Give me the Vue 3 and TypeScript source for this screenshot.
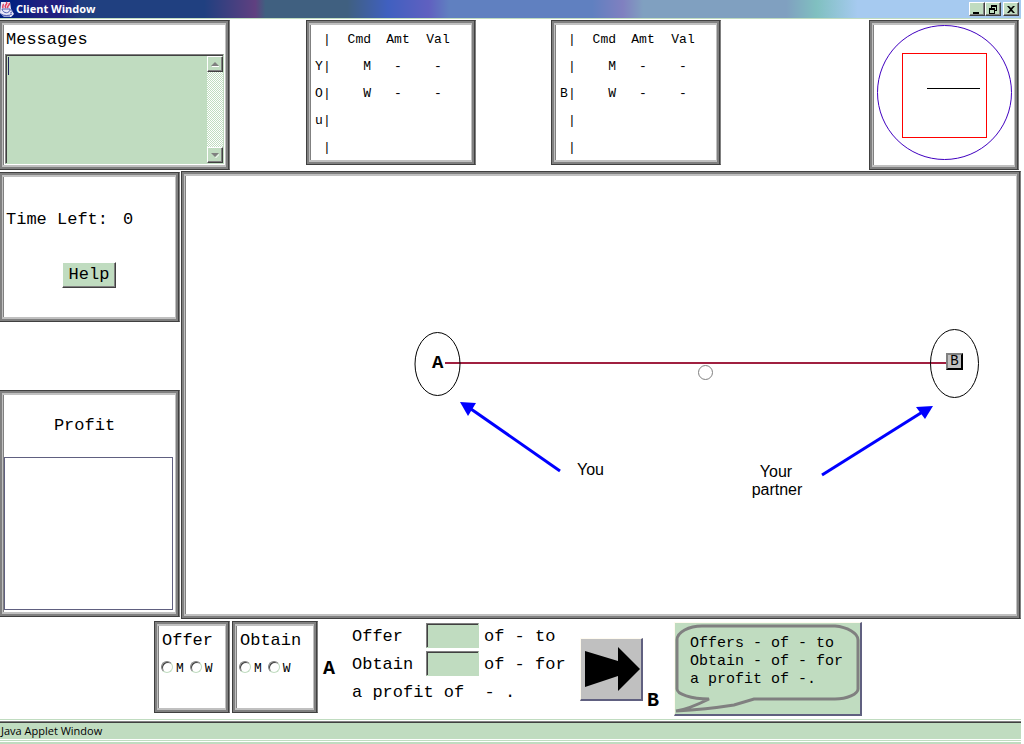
<script setup lang="ts">
import { ref } from 'vue'

interface Holding {
  label: string
  side: string[]
}

interface Choice {
  name: string
  wide: boolean
}

const holdings: Holding[] = [
  { label: 'Your holdings', side: ['', 'Y', 'O', 'u', ''] },
  { label: 'Holdings of B', side: ['', '', 'B', '', ''] },
]
const commodities = ['', 'M', 'W', '', '']
const choices: Choice[] = [
  { name: 'Offer', wide: false },
  { name: 'Obtain', wide: true },
]
const goods = ['M', 'W']

const messages = ref('')
const offerAmount = ref('')
const obtainAmount = ref('')
const picked = ref<Record<string, string>>({ Offer: '', Obtain: '' })
const timeLeft = ref(0)
</script>

<template>
  <div class="window">
    <header class="titlebar">
      <svg class="logo" width="15" height="16" viewBox="0 0 15 16" aria-hidden="true">
        <path d="M1 1h9l1 7 3 5-3 3H4L0 12z" fill="#e8e8f8" />
        <path d="M6 1c3 2-3 3 0 6M9 2c2 2-3 3-1 5M3 3c1 1-1 2 0 4" fill="none" stroke="#e04060" stroke-width="1.5" />
        <path d="M2 8h8c0 5-7 5-8 0zM10 9c3-1 3 3 0 3M1 13c3 2 8 2 11 0M3 15h7" fill="none" stroke="#5060b0" stroke-width="1" />
      </svg>
      <h1>Client Window</h1>
      <div class="controls">
        <button type="button" aria-label="Minimize">
          <svg width="12" height="10" viewBox="0 0 12 10"><path d="M2 8h6v2H2z" /></svg>
        </button>
        <button type="button" aria-label="Restore">
          <svg width="12" height="10" viewBox="0 0 12 10">
            <path fill-rule="evenodd" d="M4 1h6v6H8V6h1V3H5v1H4zM2 4h6v6H2zM3 6v3h4V6z" />
          </svg>
        </button>
        <button type="button" aria-label="Close" class="close">
          <svg width="12" height="10" viewBox="0 0 12 10">
            <path d="M2 2h2l2 2 2-2h2L7 5.500l3 3.500H8L6 7 4 9H2l3-3.500z" />
          </svg>
        </button>
      </div>
    </header>

    <section class="top">
      <div class="panel flush messages">
        <label for="messages">Messages</label>
        <div class="message-box">
          <textarea id="messages" v-model="messages"></textarea>
          <span class="caret"></span>
          <div class="scrollbar">
            <button type="button" aria-label="Scroll up">
              <svg width="8" height="5" viewBox="0 0 8 5"><path d="M4 0l4 4H0z" fill="#808080" /><path d="M1 4h7v1H1z" fill="#fff" /></svg>
            </button>
            <button type="button" aria-label="Scroll down">
              <svg width="8" height="5" viewBox="0 0 8 5"><path d="M8 1v1L5 5H4z" fill="#fff" /><path d="M0 0h8L4 4z" fill="#808080" /></svg>
            </button>
          </div>
        </div>
      </div>

      <div v-for="(h, n) in holdings" :key="h.label" class="panel holding" :class="{ second: n === 1 }">
        <table :aria-label="h.label">
          <tbody>
            <tr v-for="(c, i) in commodities" :key="i">
              <td class="side">{{ h.side[i] }}</td>
              <td class="side">|</td>
              <template v-if="i === 0">
                <th class="cmd" scope="col">Cmd</th>
                <th class="num" scope="col">Amt</th>
                <th class="num" scope="col">Val</th>
              </template>
              <template v-else>
                <td class="cmd">{{ c }}</td>
                <td class="num">{{ c ? '-' : '' }}</td>
                <td class="num">{{ c ? '-' : '' }}</td>
              </template>
            </tr>
          </tbody>
        </table>
      </div>

      <div class="panel dial">
        <svg viewBox="0 0 140 140" aria-hidden="true">
          <circle cx="70.500" cy="67.500" r="67" fill="none" stroke="#4000c0" />
          <rect x="28.500" y="28.500" width="84" height="84" fill="none" stroke="#f00" />
          <path d="M53 63.500h53" stroke="#000" />
        </svg>
      </div>
    </section>

    <main class="middle">
      <aside>
        <div class="panel flush time">
          <p class="clock"><span>Time Left:</span><output>{{ timeLeft }}</output></p>
          <button type="button" class="help">Help</button>
        </div>
        <div class="panel flush profit">
          <h2>Profit</h2>
          <div class="profit-list"></div>
        </div>
      </aside>

      <div class="panel stage">
        <svg viewBox="186 176 830 438" role="group" aria-label="Network">
          <path d="M445 363H948" stroke="#a02040" stroke-width="2" />
          <ellipse cx="437.500" cy="364" rx="22.500" ry="31.500" fill="none" stroke="#000" />
          <text x="432" y="368" class="node">A</text>
          <circle cx="705.500" cy="372.500" r="7" fill="none" stroke="#808080" />
          <ellipse cx="954.500" cy="363.500" rx="24" ry="34" fill="none" stroke="#000" />
          <foreignObject x="946" y="353" width="17" height="17">
            <button type="button" class="partner">B</button>
          </foreignObject>
          <path d="M471 409l89 62" stroke="#00f" stroke-width="3" />
          <path d="M460 402l16 1-8 13z" fill="#00f" />
          <path d="M822 475l102-64" stroke="#00f" stroke-width="3" />
          <path d="M933 406l-17 1 9 12z" fill="#00f" />
          <text x="577" y="475" class="note">You</text>
          <text x="776" y="477" class="note mid">Your</text>
          <text x="777" y="495" class="note mid">partner</text>
        </svg>
      </div>
    </main>

    <section class="bottom">
      <fieldset v-for="c in choices" :key="c.name" class="panel choice" :class="{ wide: c.wide }">
        <legend>{{ c.name }}</legend>
        <div class="radios">
          <label v-for="g in goods" :key="g">
            <input v-model="picked[c.name]" type="radio" :name="c.name" :value="g" />
            <span>{{ g }}</span>
          </label>
        </div>
      </fieldset>

      <strong class="from">A</strong>

      <form class="deal" @submit.prevent>
        <label for="offer-amount">Offer</label>
        <input id="offer-amount" v-model="offerAmount" type="text" />
        <span>of - to</span>
        <label for="obtain-amount">Obtain</label>
        <input id="obtain-amount" v-model="obtainAmount" type="text" />
        <span>of - for</span>
        <p>a profit of&nbsp; - .</p>
      </form>

      <button type="button" class="send" aria-label="Send offer">
        <svg width="60" height="60" viewBox="0 0 60 60">
          <path d="M4 12l33 10V8l22 22-22 22V37L4 48z" />
        </svg>
      </button>

      <strong class="to">B</strong>

      <div class="bubble">
        <svg width="185" height="91" viewBox="0 0 185 91" aria-hidden="true">
          <path
            d="M27 3H160C172 4 183 10 183 17V66C183 71 172 76 160 76H79L59 82C40 85 20 87 1 88C14 86 24 81 34 76C16 76 2 71 2 66V17C2 9 14 3 27 3z"
            fill="none"
            stroke="#808080"
            stroke-width="3"
          />
        </svg>
        <p>Offers - of - to<br />Obtain - of - for<br />a profit of -.</p>
      </div>
    </section>

    <footer class="status"><span>Java Applet Window</span></footer>
  </div>
</template>

<style>
body {
  background: #fff;
}
</style>

<style scoped>
* {
  box-sizing: border-box;
}

.window {
  margin-right: 3px;
  color: #000;
  background: #fff;
  font: 17px/20px 'Liberation Mono', monospace;
}

h1,
h2,
p {
  margin: 0;
  font-weight: normal;
}

button,
input,
textarea {
  margin: 0;
  padding: 0;
  border-radius: 0;
  font: inherit;
  color: inherit;
}

svg {
  display: block;
}

.titlebar {
  display: flex;
  align-items: center;
  height: 19px;
  border-bottom: 1px solid #c0dcc0;
  background: linear-gradient(
    90deg,
    #002080 0,
    #002080 1%,
    #202080 4%,
    #202080 6%,
    #204080 8%,
    #204080 20%,
    #604080 25%,
    #406080 26%,
    #406080 34%,
    #4060c0 38%,
    #6060c0 42%,
    #6080c0 44%,
    #6080c0 58%,
    #8080c0 61%,
    #80a0c0 63%,
    #80a0c0 77%,
    #80c0c0 80%,
    #a6caf0 84%
  );
}

.titlebar h1 {
  flex: 1;
  margin-left: 1px;
  color: #fff;
  font: bold 11px/18px 'Open Sans', 'Noto Sans', sans-serif;
}

.controls {
  display: flex;
  padding-right: 2px;
}

.controls button {
  width: 16px;
  height: 14px;
  border: 1px solid #fff;
  border-right: 1px solid #404040;
  border-bottom: 1px solid #404040;
  box-shadow: inset -1px -1px 0 #808080;
  background: #c0dcc0;
  padding-left: 1px;
}

.controls .close {
  margin-left: 2px;
}

.panel {
  border: 1px solid #404040;
  border-right-color: #808080;
  padding: 4px;
  background: #fff;
  box-shadow:
    inset -1px 0 0 #404040,
    inset 2px 2px 0 #808080,
    inset -3px -2px 0 #808080,
    inset 3px 4px 0 #c0c0c0,
    inset -4px -4px 0 #c0c0c0,
    inset 4px 0 0 #808080;
}

.flush {
  border-left-width: 0;
}

.top {
  display: grid;
  grid-template-columns: 230px 76fr 170px 75fr 170px 148fr 150px 2px;
  align-items: start;
  padding: 1px 0;
}

.messages {
  height: 150px;
}

.messages label {
  display: block;
  padding: 5px 0 4px 2px;
}

.message-box {
  display: flex;
  position: relative;
  height: 110px;
  margin: 0 1px;
  border: 1px solid #808080;
  border-right-color: #c0dcc0;
  border-bottom-color: #c0dcc0;
  box-shadow: inset 1px 1px 0 #404040;
  background: #c0dcc0;
  padding: 1px 0 0 1px;
}

.message-box textarea {
  flex: 1;
  min-width: 0;
  border: 0;
  background: transparent;
  resize: none;
  outline: none;
}

.caret {
  position: absolute;
  left: 2px;
  top: 2px;
  width: 1px;
  height: 18px;
  background: #202060;
}

.scrollbar {
  display: flex;
  flex-direction: column;
  justify-content: space-between;
  width: 16px;
  background: repeating-conic-gradient(#c0dcc0 0 25%, #fff 0 50%) 0 0 / 2px 2px;
}

.scrollbar button {
  display: grid;
  place-items: center;
  width: 16px;
  height: 16px;
  border: 1px solid #fff;
  border-right-color: #404040;
  border-bottom-color: #404040;
  box-shadow: inset -1px -1px 0 #808080;
  background: #c0dcc0;
}

.holding {
  grid-column: 3;
  height: 145px;
  padding-top: 5px;
}

.holding.second {
  grid-column: 5;
}

.holding table {
  border-collapse: collapse;
  margin-left: 4px;
  font-size: 13px;
}

.holding tr {
  height: 27px;
}

.holding td,
.holding th {
  padding: 0;
  font-weight: normal;
  text-align: center;
}

.holding .side {
  min-width: 8px;
}

.holding .cmd {
  min-width: 40px;
  text-align: right;
}

.holding .num {
  min-width: 40px;
}

.holding .cmd + .num {
  min-width: 47px;
  padding-left: 7px;
}

.dial {
  grid-column: 7;
  height: 150px;
}

.middle {
  display: grid;
  grid-template-columns: 180px 1fr;
  column-gap: 1px;
}

aside {
  display: flex;
  flex-direction: column;
  justify-content: space-between;
  padding: 1px 0 2px;
}

.time {
  height: 150px;
}

.clock {
  display: flex;
  gap: 15px;
  padding: 33px 0 32px 2px;
}

.help {
  display: block;
  width: 54px;
  height: 26px;
  margin: 0 auto 0 58px;
  border: 1px solid #fff;
  border-right-color: #404040;
  border-bottom-color: #404040;
  box-shadow: inset -1px -1px 0 #808080;
  background: #c0dcc0;
}

.profit {
  display: flex;
  flex-direction: column;
  height: 227px;
}

.profit h2 {
  padding: 21px 0;
  margin-right: 10px;
  font-size: 17px;
  text-align: center;
}

.profit-list {
  flex: 1;
  margin: 0 2px 2px 0;
  border: 1px solid #606080;
}

.stage svg {
  width: 100%;
}

.node {
  font: bold 19px 'Liberation Mono', monospace;
}

.note {
  font: 16px 'Liberation Sans', Arial, sans-serif;
}

.mid {
  text-anchor: middle;
}

.partner {
  display: block;
  width: 17px;
  height: 17px;
  border: 2px solid #808080;
  border-right-color: #000;
  border-bottom-color: #000;
  background: #c0c0c0;
  font-size: 14px;
  line-height: 13px;
}

.bottom {
  display: flex;
  align-items: flex-start;
  height: 100px;
  padding: 2px 0 0 154px;
}

.choice {
  width: 76px;
  height: 92px;
  min-width: 0;
  margin: 0 2px 0 0;
  padding: 9px 4px 4px 7px;
}

.choice.wide {
  width: 86px;
  margin-right: 4px;
}

.choice legend {
  float: left;
  padding: 0;
}

.radios {
  clear: both;
  display: flex;
  gap: 7px;
  padding-top: 8px;
}

.radios label {
  display: flex;
  align-items: center;
  gap: 3px;
  font-size: 13px;
}

.radios input {
  appearance: none;
  width: 12px;
  height: 12px;
  margin: 0 0 4px -1px;
  border: 1px solid #808080;
  border-right-color: #c0dcc0;
  border-bottom-color: #c0dcc0;
  border-radius: 50%;
  box-shadow: inset 1px 1px 0 #404040;
  background: #fff;
}

.radios input:checked {
  background: radial-gradient(#000 2px, #fff 3px);
}

.from,
.to {
  width: 12px;
  font-size: 20px;
  line-height: 24px;
}

.from {
  margin: 36px 17px 0 1px;
}

.deal {
  display: grid;
  grid-template-columns: 74px 53px auto;
  grid-auto-rows: 25px;
  gap: 3px 0;
  align-items: center;
  width: 228px;
  padding-top: 2px;
  line-height: 22px;
}

.deal input {
  width: 53px;
  height: 25px;
  border: 1px solid #808080;
  border-right-color: #c0dcc0;
  border-bottom-color: #c0dcc0;
  box-shadow: inset 1px 1px 0 #404040;
  background: #c0dcc0;
  outline: none;
}

.deal label,
.deal span,
.deal p {
  padding-top: 2px;
}

.deal span {
  padding-left: 5px;
}

.deal p {
  grid-column: 1 / -1;
}

.send {
  width: 63px;
  height: 63px;
  margin-top: 17px;
  border: 1px solid #fffbf0;
  border-right: 2px solid #606080;
  border-bottom: 2px solid #606080;
  background: #c0c0c0;
}

.to {
  margin: 68px 15px 0 4px;
}

.bubble {
  position: relative;
  width: 188px;
  height: 94px;
  margin-top: 1px;
  border: 1px solid #fffbf0;
  border-right: 2px solid #606080;
  border-bottom: 2px solid #606080;
  background: #c0dcc0;
  font-size: 15px;
  line-height: 18px;
}

.bubble svg {
  position: absolute;
  left: 0;
  top: 0;
}

.bubble p {
  position: relative;
  padding: 12px 0 0 15px;
  white-space: nowrap;
}

.status {
  height: 25px;
  border-top: 1px solid #c0dcc0;
  border-bottom: 2px solid #c0dcc0;
  padding: 1px 0;
  background: #fff;
}

.status span {
  display: block;
  height: 18px;
  border-top: 1px solid #808080;
  box-shadow:
    inset 0 1px 0 #404040,
    0 1px 0 #fff,
    0 2px 0 #c0dcc0;
  background: #c0dcc0;
  padding: 1px 0 0 1px;
  font: 11px/16px 'Open Sans', 'Noto Sans', sans-serif;
}
</style>
